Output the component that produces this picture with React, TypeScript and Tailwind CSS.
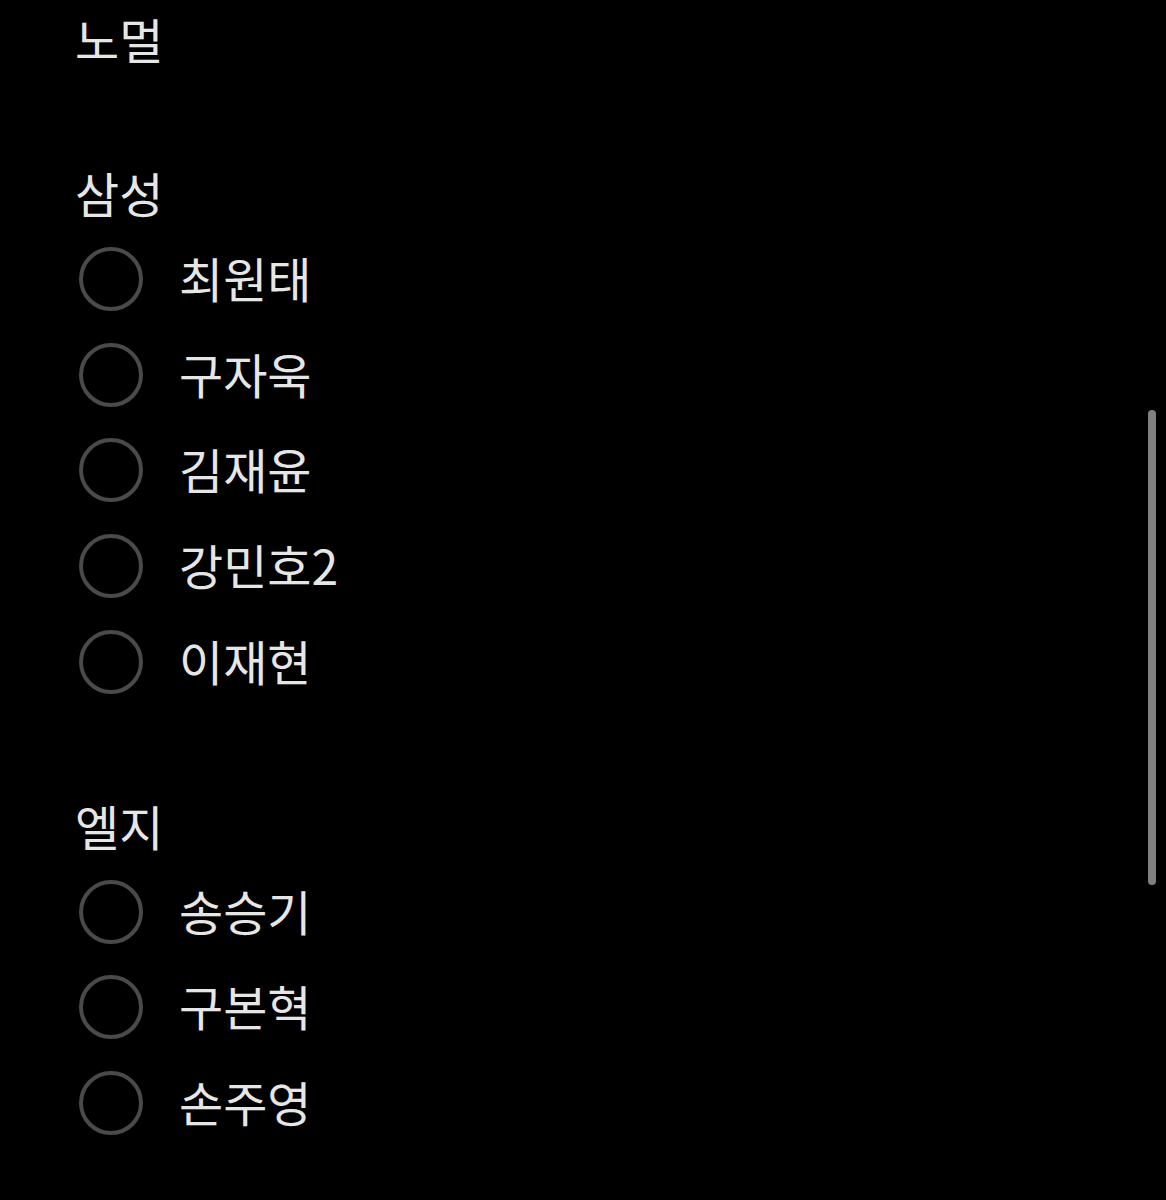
import React from "react";

type Section = {
  title: string;
  players: string[];
};

const sections: Section[] = [
  { title: "노멀", players: [] },
  { title: "삼성", players: ["최원태", "구자욱", "김재윤", "강민호2", "이재현"] },
  { title: "엘지", players: ["송승기", "구본혁", "손주영"] },
];

function RadioRow({ name }: { name: string }) {
  return (
    <div className="flex h-[95.75px] items-center">
      <div className="ml-[4px] h-[64px] w-[64px] shrink-0 rounded-full border-[4px] border-[#4a4a4a]" />
      <span className="ml-[36px] pb-[4px] text-[48px] font-normal leading-none text-[#e6e6e6]">{name}</span>
    </div>
  );
}

export default function App() {
  return (
    <div
      className="relative min-h-[1200px] w-full overflow-hidden bg-black pl-[75px] pt-[3px]"
      style={{ fontFamily: '"Noto Sans CJK KR", "Noto Sans", sans-serif' }}
    >
      <div className="flex flex-col gap-[80px]">
        {sections.map((s) => (
          <section key={s.title} className="flex flex-col">
            <div className="flex h-[74px] items-center pb-[4px] text-[48px] font-normal leading-none text-[#e6e6e6]">
              {s.title}
            </div>
            {s.players.map((p) => (
              <RadioRow key={p} name={p} />
            ))}
          </section>
        ))}
      </div>

      {/* overlay scrollbar */}
      <div className="absolute left-[1148px] top-[410px] h-[475px] w-[8px] rounded-full bg-[#808080]" />
    </div>
  );
}
